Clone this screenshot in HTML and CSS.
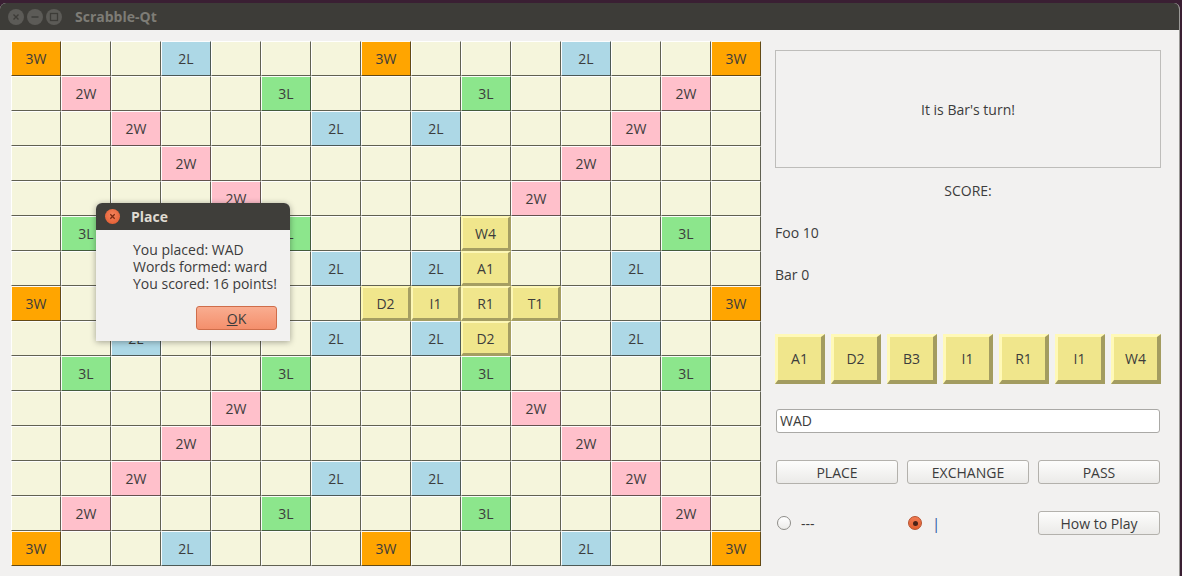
FILE: index.html
```html
<!DOCTYPE html>
<html>
<head>
<meta charset="utf-8">
<title>Scrabble-Qt</title>
<link rel="stylesheet" href="styles.css">
</head>
<body>
<div class="window">
  <div class="titlebar">
    <div class="wm-buttons">
      <span class="wm-btn"><svg width="16" height="16" viewBox="0 0 16 16"><path d="M5.5 5.5 L10.5 10.5 M10.5 5.5 L5.5 10.5" stroke="#3d3c38" stroke-width="1.4" fill="none"/></svg></span>
      <span class="wm-btn"><svg width="16" height="16" viewBox="0 0 16 16"><path d="M4.5 8 H11.5" stroke="#3d3c38" stroke-width="1.5" fill="none"/></svg></span>
      <span class="wm-btn"><svg width="16" height="16" viewBox="0 0 16 16"><rect x="4.5" y="4.5" width="7" height="7" stroke="#3d3c38" stroke-width="1.3" fill="none"/></svg></span>
    </div>
    <span class="title">Scrabble-Qt</span>
  </div>

  <div class="content">
    <div class="board">
      <div class="sq tw">3W</div><div class="sq"></div><div class="sq"></div><div class="sq dl">2L</div><div class="sq"></div><div class="sq"></div><div class="sq"></div><div class="sq tw">3W</div><div class="sq"></div><div class="sq"></div><div class="sq"></div><div class="sq dl">2L</div><div class="sq"></div><div class="sq"></div><div class="sq tw">3W</div>

      <div class="sq"></div><div class="sq dw">2W</div><div class="sq"></div><div class="sq"></div><div class="sq"></div><div class="sq tl">3L</div><div class="sq"></div><div class="sq"></div><div class="sq"></div><div class="sq tl">3L</div><div class="sq"></div><div class="sq"></div><div class="sq"></div><div class="sq dw">2W</div><div class="sq"></div>

      <div class="sq"></div><div class="sq"></div><div class="sq dw">2W</div><div class="sq"></div><div class="sq"></div><div class="sq"></div><div class="sq dl">2L</div><div class="sq"></div><div class="sq dl">2L</div><div class="sq"></div><div class="sq"></div><div class="sq"></div><div class="sq dw">2W</div><div class="sq"></div><div class="sq"></div>

      <div class="sq"></div><div class="sq"></div><div class="sq"></div><div class="sq dw">2W</div><div class="sq"></div><div class="sq"></div><div class="sq"></div><div class="sq"></div><div class="sq"></div><div class="sq"></div><div class="sq"></div><div class="sq dw">2W</div><div class="sq"></div><div class="sq"></div><div class="sq"></div>

      <div class="sq"></div><div class="sq"></div><div class="sq"></div><div class="sq"></div><div class="sq dw">2W</div><div class="sq"></div><div class="sq"></div><div class="sq"></div><div class="sq"></div><div class="sq"></div><div class="sq dw">2W</div><div class="sq"></div><div class="sq"></div><div class="sq"></div><div class="sq"></div>

      <div class="sq"></div><div class="sq tl">3L</div><div class="sq"></div><div class="sq"></div><div class="sq"></div><div class="sq tl">3L</div><div class="sq"></div><div class="sq"></div><div class="sq"></div><div class="sq tile">W4</div><div class="sq"></div><div class="sq"></div><div class="sq"></div><div class="sq tl">3L</div><div class="sq"></div>

      <div class="sq"></div><div class="sq"></div><div class="sq dl">2L</div><div class="sq"></div><div class="sq"></div><div class="sq"></div><div class="sq dl">2L</div><div class="sq"></div><div class="sq dl">2L</div><div class="sq tile">A1</div><div class="sq"></div><div class="sq"></div><div class="sq dl">2L</div><div class="sq"></div><div class="sq"></div>

      <div class="sq tw">3W</div><div class="sq"></div><div class="sq"></div><div class="sq"></div><div class="sq"></div><div class="sq"></div><div class="sq"></div><div class="sq tile">D2</div><div class="sq tile">I1</div><div class="sq tile">R1</div><div class="sq tile">T1</div><div class="sq"></div><div class="sq"></div><div class="sq"></div><div class="sq tw">3W</div>

      <div class="sq"></div><div class="sq"></div><div class="sq dl">2L</div><div class="sq"></div><div class="sq"></div><div class="sq"></div><div class="sq dl">2L</div><div class="sq"></div><div class="sq dl">2L</div><div class="sq tile">D2</div><div class="sq"></div><div class="sq"></div><div class="sq dl">2L</div><div class="sq"></div><div class="sq"></div>

      <div class="sq"></div><div class="sq tl">3L</div><div class="sq"></div><div class="sq"></div><div class="sq"></div><div class="sq tl">3L</div><div class="sq"></div><div class="sq"></div><div class="sq"></div><div class="sq tl">3L</div><div class="sq"></div><div class="sq"></div><div class="sq"></div><div class="sq tl">3L</div><div class="sq"></div>

      <div class="sq"></div><div class="sq"></div><div class="sq"></div><div class="sq"></div><div class="sq dw">2W</div><div class="sq"></div><div class="sq"></div><div class="sq"></div><div class="sq"></div><div class="sq"></div><div class="sq dw">2W</div><div class="sq"></div><div class="sq"></div><div class="sq"></div><div class="sq"></div>

      <div class="sq"></div><div class="sq"></div><div class="sq"></div><div class="sq dw">2W</div><div class="sq"></div><div class="sq"></div><div class="sq"></div><div class="sq"></div><div class="sq"></div><div class="sq"></div><div class="sq"></div><div class="sq dw">2W</div><div class="sq"></div><div class="sq"></div><div class="sq"></div>

      <div class="sq"></div><div class="sq"></div><div class="sq dw">2W</div><div class="sq"></div><div class="sq"></div><div class="sq"></div><div class="sq dl">2L</div><div class="sq"></div><div class="sq dl">2L</div><div class="sq"></div><div class="sq"></div><div class="sq"></div><div class="sq dw">2W</div><div class="sq"></div><div class="sq"></div>

      <div class="sq"></div><div class="sq dw">2W</div><div class="sq"></div><div class="sq"></div><div class="sq"></div><div class="sq tl">3L</div><div class="sq"></div><div class="sq"></div><div class="sq"></div><div class="sq tl">3L</div><div class="sq"></div><div class="sq"></div><div class="sq"></div><div class="sq dw">2W</div><div class="sq"></div>

      <div class="sq tw">3W</div><div class="sq"></div><div class="sq"></div><div class="sq dl">2L</div><div class="sq"></div><div class="sq"></div><div class="sq"></div><div class="sq tw">3W</div><div class="sq"></div><div class="sq"></div><div class="sq"></div><div class="sq dl">2L</div><div class="sq"></div><div class="sq"></div><div class="sq tw">3W</div>
    </div>

    <div class="panel">
      <div class="status">It is Bar's turn!</div>
      <div class="score-title">SCORE:</div>
      <div class="score">Foo 10</div>
      <div class="score">Bar 0</div>
      <div class="rack">
        <div class="rtile">A1</div>
        <div class="rtile">D2</div>
        <div class="rtile">B3</div>
        <div class="rtile">I1</div>
        <div class="rtile">R1</div>
        <div class="rtile">I1</div>
        <div class="rtile">W4</div>
      </div>
      <div class="word">WAD</div>
      <div class="actions">
        <div class="btn">PLACE</div>
        <div class="btn">EXCHANGE</div>
        <div class="btn">PASS</div>
      </div>
      <div class="actions options">
        <div class="opt"><span class="radio"></span><span>---</span></div>
        <div class="opt"><span class="radio on"></span><span class="cursor">|</span></div>
        <div class="btn">How to Play</div>
      </div>
    </div>
  </div>
</div>

<div class="dialog">
  <div class="dlg-title">
    <span class="dlg-close"><svg width="15" height="15" viewBox="0 0 15 15"><path d="M5.3 5.3 L9.7 9.7 M9.7 5.3 L5.3 9.7" stroke="#7a2a12" stroke-width="1.3" fill="none"/></svg></span>
    <span class="dlg-name">Place</span>
  </div>
  <div class="dlg-body">
    <div class="dlg-text">You placed: WAD</div>
    <div class="dlg-text">Words formed: ward</div>
    <div class="dlg-text">You scored: 16 points!</div>
    <div class="ok"><span class="mn">O</span>K</div>
  </div>
</div>
</body>
</html>
```

FILE: styles.css
```css
html, body {
  margin: 0;
  padding: 0;
}

body {
  width: 1182px;
  height: 576px;
  overflow: hidden;
  background: #3a1f33;
  font-family: "Open Sans", "DejaVu Sans", sans-serif;
  font-size: 14px;
  color: #3c3c3c;
}

.window {
  margin-top: 3px;
  width: 1179px;
  height: 573px;
  background: #f2f1f0;
  border-right: 1px solid #9b9a97;
  border-radius: 6px 6px 0 0;
  overflow: hidden;
}

.titlebar {
  height: 27px;
  background: #3d3c38;
  display: flex;
  align-items: center;
}

.wm-buttons {
  display: flex;
  gap: 3px;
  margin-left: 8px;
}

.wm-btn {
  width: 16px;
  height: 16px;
  border-radius: 50%;
  background: #5c5b57;
  display: flex;
}

.title {
  margin-left: 13px;
  font-weight: bold;
  font-size: 14px;
  color: #7e7c76;
}

.content {
  display: flex;
  padding: 11px 0 0 11px;
}

.board {
  display: grid;
  grid-template-columns: repeat(15, 50px);
  grid-template-rows: repeat(15, 35px);
  width: 750px;
  flex: none;
}

.sq {
  box-sizing: border-box;
  background: #f5f5dc;
  border: 1px solid;
  border-color: rgba(255,255,255,0.95) rgba(40,40,30,0.72) rgba(40,40,30,0.72) rgba(255,255,255,0.95);
  display: flex;
  align-items: center;
  justify-content: center;
  font-size: 14px;
  color: #3c3c3c;
}

.tw { background: #ffa500; }
.dw { background: #ffc0cb; }
.dl { background: #add8e6; }
.tl { background: #8ce68c; }

.tile {
  background: #f0e68c;
  border-width: 2px 3px 3px 2px;
  border-color: #fdf7b6 #a59e62 #a59e62 #fdf7b6;
}

.panel {
  margin-left: 14px;
  width: 386px;
  display: flex;
  flex-direction: column;
}

.status {
  margin-top: 9px;
  height: 118px;
  box-sizing: border-box;
  border: 1px solid #bebdba;
  display: flex;
  align-items: center;
  justify-content: center;
}

.score-title {
  margin-top: 13px;
  line-height: 20px;
  text-align: center;
}

.score {
  margin-top: 22px;
  line-height: 20px;
}

.rack {
  margin-top: 49px;
  display: flex;
  gap: 6px;
}

.rtile {
  box-sizing: border-box;
  width: 50px;
  height: 50px;
  background: #f0e68c;
  border-style: solid;
  border-width: 3px 4px 4px 3px;
  border-color: #fff9b8 #a39c60 #a39c60 #fff9b8;
  display: flex;
  align-items: center;
  justify-content: center;
}

.word {
  margin: 25px 1px 0;
  height: 24px;
  box-sizing: border-box;
  border: 1px solid #aaa9a6;
  border-radius: 3px;
  background: #ffffff;
  padding-left: 3px;
  line-height: 22px;
}

.actions {
  margin: 27px 1px 0;
  display: grid;
  grid-template-columns: repeat(3, 1fr);
  gap: 9px;
}

.btn {
  height: 24px;
  box-sizing: border-box;
  border: 1px solid #b3b1ac;
  border-radius: 3px;
  background: linear-gradient(#fdfdfc, #ebeae8);
  display: flex;
  align-items: center;
  justify-content: center;
}

.opt {
  display: flex;
  align-items: center;
  gap: 10px;
  padding-left: 1px;
}

.radio {
  width: 14px;
  height: 14px;
  box-sizing: border-box;
  border-radius: 50%;
  border: 1px solid #8e8d89;
  background: linear-gradient(#ffffff, #ecebe9);
  display: flex;
  align-items: center;
  justify-content: center;
}

.radio.on {
  border-color: #b6502c;
  background: linear-gradient(#f07a52, #e3602f);
}

.radio.on::after {
  content: "";
  width: 5px;
  height: 5px;
  border-radius: 50%;
  background: #4b2318;
}

.cursor {
  color: #2d55a3;
  font-size: 15px;
}

.dialog {
  position: absolute;
  left: 96px;
  top: 203px;
  width: 194px;
  height: 138px;
  background: #f2f1f0;
  border-radius: 6px 6px 0 0;
  box-shadow: 0 1px 6px rgba(0,0,0,0.35);
  display: flex;
  flex-direction: column;
  overflow: hidden;
}

.dlg-title {
  height: 27px;
  flex: none;
  background: #3f3e3a;
  display: flex;
  align-items: center;
}

.dlg-close {
  margin-left: 9px;
  width: 15px;
  height: 15px;
  border-radius: 50%;
  background: radial-gradient(circle at 50% 40%, #f5855e, #e0562a);
  display: flex;
}

.dlg-name {
  margin-left: 11px;
  font-weight: bold;
  color: #dfdbd2;
}

.dlg-body {
  display: flex;
  flex-direction: column;
  padding: 11px 0 0 37px;
}

.dlg-text {
  line-height: 17px;
}

.ok {
  align-self: flex-end;
  margin: 14px 13px 0 0;
  width: 81px;
  height: 24px;
  box-sizing: border-box;
  border: 1px solid #cf6d4a;
  border-radius: 3px;
  background: linear-gradient(#f9ad90, #f48f6c);
  display: flex;
  align-items: center;
  justify-content: center;
}

.mn {
  text-decoration: underline;
}
```
